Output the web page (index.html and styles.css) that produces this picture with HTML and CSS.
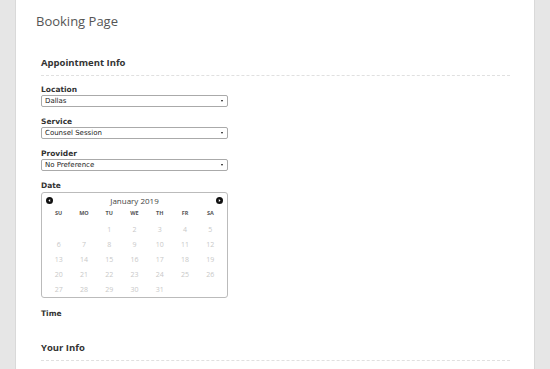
FILE: index.html
```html
<!DOCTYPE html>
<html lang="en">
<head>
    <meta charset="UTF-8">
    <meta name="viewport" content="width=device-width, initial-scale=1.0">
    <title>Booking Page</title>
    <link rel="stylesheet" href="styles.css">
</head>
<body>
    <div class="page">
        <h1 class="page-title">Booking Page</h1>

        <!-- Appointment Info -->
        <div class="section">
            <h2 class="section-title">Appointment Info</h2>

            <div class="field">
                <label class="field-label">Location</label>
                <div class="select">Dallas<span class="caret"></span></div>
            </div>

            <div class="field">
                <label class="field-label">Service</label>
                <div class="select">Counsel Session<span class="caret"></span></div>
            </div>

            <div class="field">
                <label class="field-label">Provider</label>
                <div class="select">No Preference<span class="caret"></span></div>
            </div>

            <div class="field field-date">
                <label class="field-label">Date</label>
                <div class="calendar">
                    <div class="cal-head">
                        <svg class="cal-nav" viewBox="0 0 8 8"><circle cx="4" cy="4" r="4" fill="#111"/><path d="M4.8 2.2 L2.8 4 L4.8 5.8 Z" fill="#fff"/></svg>
                        <span class="cal-month">January 2019</span>
                        <svg class="cal-nav" viewBox="0 0 8 8"><circle cx="4" cy="4" r="4" fill="#111"/><path d="M3.2 2.2 L5.2 4 L3.2 5.8 Z" fill="#fff"/></svg>
                    </div>
                    <div class="cal-grid" id="calGrid">
                        <span class="dow">SU</span><span class="dow">MO</span><span class="dow">TU</span><span class="dow">WE</span><span class="dow">TH</span><span class="dow">FR</span><span class="dow">SA</span>
                    </div>
                </div>
            </div>

            <div class="field field-last">
                <label class="field-label">Time</label>
            </div>
        </div>

        <!-- Your Info -->
        <div class="section">
            <h2 class="section-title">Your Info</h2>
        </div>
    </div>

    <script>
        // January 2019 starts on a Tuesday
        const grid = document.getElementById('calGrid');
        for (let i = 0; i < 2; i++) {
            grid.insertAdjacentHTML('beforeend', '<span class="day"></span>');
        }
        for (let d = 1; d <= 31; d++) {
            grid.insertAdjacentHTML('beforeend', `<span class="day">${d}</span>`);
        }
    </script>
</body>
</html>
```

FILE: styles.css
```css
* {
    box-sizing: border-box;
}

body {
    margin: 0;
    background: #e6e6e6;
    font-family: "Open Sans", Arial, sans-serif;
    color: #333;
}

.page {
    margin: 0 15px;
    min-height: 369px;
    background: #fff;
    border-left: 1px solid #d9d9d9;
    border-right: 1px solid #d9d9d9;
    padding: 11px 24px 0 20px;
}

.page-title {
    margin: 0 0 25px 0;
    font-size: 13px;
    font-weight: normal;
    line-height: 20px;
    color: #555;
}

.section {
    padding-left: 5px;
}

.section-title {
    margin: 0 0 9px 0;
    padding-bottom: 5px;
    font-size: 9.5px;
    font-weight: bold;
    line-height: 14px;
    color: #333;
    border-bottom: 1px dashed #e0e0e0;
}

.field {
    margin-bottom: 10px;
}

.field-date {
    margin-bottom: 11px;
}

.field-last {
    margin-bottom: 22px;
}

.field-label {
    display: block;
    font-family: "DejaVu Sans", Verdana, sans-serif;
    font-size: 7.5px;
    font-weight: bold;
    line-height: 10px;
    color: #333;
}

.select {
    position: relative;
    width: 187px;
    height: 12px;
    padding-left: 3px;
    border: 1px solid #aaa;
    border-radius: 2px;
    font-family: "DejaVu Sans", Verdana, sans-serif;
    font-size: 7px;
    line-height: 10px;
    color: #222;
}

.caret {
    position: absolute;
    right: 4px;
    top: 4px;
    border-left: 1.5px solid transparent;
    border-right: 1.5px solid transparent;
    border-top: 2.5px solid #111;
}

.calendar {
    width: 187px;
    height: 106px;
    margin-top: 1px;
    border: 1px solid #bbb;
    border-radius: 3px;
    padding: 1px 4px 2px 4px;
}

.cal-head {
    display: flex;
    align-items: center;
    justify-content: space-between;
    height: 12px;
}

.cal-nav {
    width: 7px;
    height: 7px;
}

.cal-month {
    font-size: 8px;
    color: #444;
}

.cal-grid {
    display: grid;
    grid-template-columns: repeat(7, 1fr);
    grid-auto-rows: 15px;
    margin-top: 1px;
}

.dow {
    text-align: center;
    font-size: 5.5px;
    font-weight: bold;
    color: #555;
    line-height: 12px;
}

.day {
    text-align: center;
    font-size: 7px;
    color: #c8c8c8;
    line-height: 15px;
}
```
